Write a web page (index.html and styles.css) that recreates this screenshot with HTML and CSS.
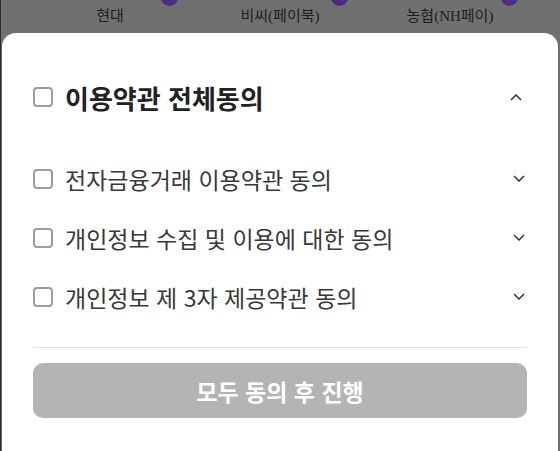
FILE: index.html
```html
<!DOCTYPE html>
<html lang="ko">
<head>
<meta charset="utf-8">
<link rel="stylesheet" href="styles.css">
</head>
<body>
<div class="screen">
  <div class="cards">
    <div class="card"><span class="card-label">현대</span><span class="badge"></span></div>
    <div class="card"><span class="card-label">비씨(페이북)</span><span class="badge"></span></div>
    <div class="card"><span class="card-label">농협(NH페이)</span><span class="badge"></span></div>
  </div>
  <div class="sheet">
    <div class="row title-row">
      <span class="check"></span>
      <span class="title">이용약관 전체동의</span>
      <svg class="chev chev-up" width="12" height="7" viewBox="0 0 12 7"><polyline points="1,6 6,1 11,6" fill="none" stroke="#333" stroke-width="1.5"/></svg>
    </div>
    <div class="items">
      <div class="row item">
        <span class="check"></span>
        <span class="label">전자금융거래 이용약관 동의</span>
        <svg class="chev" width="12" height="7" viewBox="0 0 12 7"><polyline points="1,1 6,6 11,1" fill="none" stroke="#333" stroke-width="1.5"/></svg>
      </div>
      <div class="row item">
        <span class="check"></span>
        <span class="label">개인정보 수집 및 이용에 대한 동의</span>
        <svg class="chev" width="12" height="7" viewBox="0 0 12 7"><polyline points="1,1 6,6 11,1" fill="none" stroke="#333" stroke-width="1.5"/></svg>
      </div>
      <div class="row item">
        <span class="check"></span>
        <span class="label">개인정보 제 3자 제공약관 동의</span>
        <svg class="chev" width="12" height="7" viewBox="0 0 12 7"><polyline points="1,1 6,6 11,1" fill="none" stroke="#333" stroke-width="1.5"/></svg>
      </div>
    </div>
    <div class="divider"></div>
    <button class="submit" type="button">모두 동의 후 진행</button>
  </div>
</div>
</body>
</html>
```

FILE: styles.css
```css
html, body {
  margin: 0;
  padding: 0;
}
body {
  width: 560px;
  height: 451px;
  overflow: hidden;
  background: #707070;
  font-family: "Noto Sans CJK KR", "Noto Sans", sans-serif;
}
.screen {
  display: flex;
  flex-direction: column;
  height: 451px;
  border-left: 1px solid #2a2a2a;
  box-sizing: border-box;
}
.cards {
  display: flex;
  height: 33px;
  padding-left: 24px;
}
.card {
  position: relative;
  width: 170px;
  display: flex;
  justify-content: center;
  align-items: center;
}
.card-label {
  font-family: "Liberation Serif", "Noto Sans CJK KR", serif;
  font-size: 15px;
  color: #1e1e1e;
  line-height: 18px;
  padding-bottom: 1px;
}
.badge {
  position: absolute;
  left: 136px;
  top: -11px;
  width: 17px;
  height: 17px;
  border-radius: 50%;
  background: #4b2d85;
}
.sheet {
  flex: 1;
  margin-right: 2px;
  margin-left: 1px;
  background: #fff;
  border-radius: 14px 14px 0 0;
  padding: 36px 31px 0 31px;
  display: flex;
  flex-direction: column;
}
.row {
  display: flex;
  align-items: center;
}
.title-row {
  height: 56px;
}
.check {
  width: 20px;
  height: 20px;
  box-sizing: border-box;
  border: 2px solid #9d9d9d;
  border-radius: 4px;
  flex: none;
}
.title {
  margin-left: 12px;
  font-size: 26px;
  font-weight: 700;
  color: #222;
  flex: 1;
}
.label {
  margin-left: 12px;
  font-size: 23px;
  color: #383838;
  flex: 1;
}
.chev {
  flex: none;
  margin-right: 2px;
}
.chev-up {
  margin-right: 5px;
}
.items {
  margin-top: 24px;
  display: flex;
  flex-direction: column;
}
.item {
  height: 59px;
}
.divider {
  margin-top: 21px;
  height: 1px;
  background: #e0e0e0;
}
.submit {
  margin-top: 15px;
  height: 55px;
  border: none;
  border-radius: 10px;
  background: #b4b4b4;
  color: #fff;
  font-family: "Noto Sans CJK KR", "Noto Sans", sans-serif;
  font-size: 23px;
  font-weight: 700;
  padding: 0;
}
```
